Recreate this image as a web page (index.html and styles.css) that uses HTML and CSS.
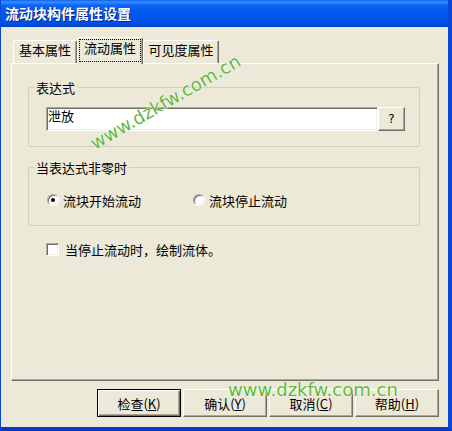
FILE: index.html
```html
<!DOCTYPE html>
<html lang="zh-CN">
<head>
  <meta charset="UTF-8">
  <title>流动块构件属性设置</title>
  <link rel="stylesheet" href="styles.css">
</head>
<body>
  <div class="window">
    <div class="titlebar">流动块构件属性设置</div>
    <div class="client">
      <div class="tabs">
        <div class="tab tab-basic">基本属性</div>
        <div class="tab tab-flow active"><span class="focus">流动属性</span></div>
        <div class="tab tab-visible">可见度属性</div>
      </div>
      <div class="panel">
        <fieldset class="group group-expr">
          <legend>表达式</legend>
          <div class="expr-row">
            <div class="edit">泄放</div>
            <button class="btn btn-q">?</button>
          </div>
        </fieldset>
        <fieldset class="group group-mode">
          <legend>当表达式非零时</legend>
          <div class="radio-row">
            <label class="radio"><span class="dot checked"></span>流块开始流动</label>
            <label class="radio"><span class="dot"></span>流块停止流动</label>
          </div>
        </fieldset>
        <label class="check"><span class="box"></span>当停止流动时，绘制流体。</label>
      </div>
      <div class="buttons">
        <button class="btn btn-wide default">检查(<u>K</u>)</button>
        <button class="btn btn-wide">确认(<u>Y</u>)</button>
        <button class="btn btn-wide">取消(<u>C</u>)</button>
        <button class="btn btn-wide">帮助(<u>H</u>)</button>
      </div>
    </div>
    <div class="watermark wm-tilted">www.dzkfw.com.cn</div>
    <div class="watermark wm-flat">www.dzkfw.com.cn</div>
  </div>
</body>
</html>
```

FILE: styles.css
```css
html, body {
  margin: 0;
  padding: 0;
  background: #ECE9D8;
}
body {
  font-family: "Noto Sans CJK SC", sans-serif;
  font-size: 13px;
  color: #000;
}
.window {
  position: relative;
  width: 452px;
  height: 431px;
  box-sizing: border-box;
  display: flex;
  flex-direction: column;
  background: #ECE9D8;
  border-left: 1px solid #0848DC;
  border-right: 4px solid #0746D6;
  border-bottom: 4px solid #0638C8;
  overflow: hidden;
}
.titlebar {
  flex: none;
  height: 27px;
  line-height: 27px;
  padding-left: 4px;
  color: #fff;
  font-size: 14px;
  font-weight: bold;
  text-shadow: 1px 1px #0A1E80;
  background: linear-gradient(to bottom, #0A62F0 0, #3A8EFF 2px, #0F66F4 5px, #0058EE 11px, #0054E8 20px, #0050E0 24px, #0040C8 27px);
}
.client {
  flex: 1;
  padding: 10px 9px 0 10px;
}

/* tabs */
.tabs {
  display: flex;
  align-items: flex-end;
  height: 26px;
  padding-left: 2px;
  position: relative;
  z-index: 1;
}
.tab {
  box-sizing: border-box;
  height: 23px;
  border: 1px solid #fff;
  border-right-color: #716F64;
  border-bottom: none;
  border-radius: 2px 2px 0 0;
  box-shadow: inset -1px 0 #ACA899;
  background: #ECE9D8;
  text-align: center;
  line-height: 17px;
  white-space: nowrap;
}
.tab-basic { width: 64px; }
.tab-flow { width: 66px; }
.tab-visible { width: 76px; }
.tab.active {
  height: 27px;
  margin-bottom: -1px;
  padding: 1px 1px 0;
}
.focus {
  display: block;
  box-sizing: border-box;
  height: 23px;
  line-height: 16px;
  border: 1px dotted #000;
}

/* panel */
.panel {
  box-sizing: border-box;
  height: 318px;
  border: 1px solid;
  border-color: #fff #716F64 #716F64 #fff;
  box-shadow: inset -1px -1px #ACA899;
  padding: 16px 0 0 16px;
}
.group {
  box-sizing: border-box;
  width: 392px;
  margin: 0;
  border: 1px solid #D0D0BF;
  border-radius: 2px;
  padding: 12px 0 15px 5px;
}
.group legend {
  padding: 0 2px;
  line-height: 15px;
}
.group-mode {
  margin-top: 13px;
  padding: 17px 0 17px 5px;
}
.expr-row {
  display: flex;
  margin-left: 12px;
}
.edit {
  box-sizing: border-box;
  width: 332px;
  height: 24px;
  border: 1px solid;
  border-color: #ACA899 #fff #fff #ACA899;
  box-shadow: inset 1px 1px #716F64, inset -1px -1px #F1EFE2;
  background: #fff;
  padding-left: 1px;
  line-height: 15px;
}

/* buttons */
.btn {
  box-sizing: border-box;
  height: 24px;
  border: 1px solid;
  border-color: #fff #716F64 #716F64 #fff;
  box-shadow: inset -1px -1px #ACA899;
  background: #ECE9D8;
  font: inherit;
  color: #000;
  padding: 0;
}
.btn-q {
  width: 27px;
  font-family: "DejaVu Sans", sans-serif;
  font-size: 12px;
}
.btn-wide {
  width: 84px;
  height: 28px;
}
.btn.default {
  border: 1px solid #000;
  box-shadow: inset 1px 1px #fff, inset -1px -1px #716F64, inset -2px -2px #ACA899;
}
.buttons {
  display: flex;
  justify-content: flex-end;
  gap: 2px;
  margin-top: 8px;
}

/* radios and checkbox */
.radio-row {
  display: flex;
  margin-left: 13px;
  height: 16px;
}
.radio {
  display: flex;
  align-items: center;
  gap: 4px;
  width: 146px;
}
.dot {
  position: relative;
  box-sizing: border-box;
  width: 12px;
  height: 12px;
  border-radius: 50%;
  border: 1px solid;
  border-color: #ACA899 #fff #fff #ACA899;
  box-shadow: inset 1px 1px #716F64, inset -1px -1px #F1EFE2;
  background: #fff;
}
.dot.checked::after {
  content: "";
  position: absolute;
  left: 3px;
  top: 3px;
  width: 4px;
  height: 4px;
  border-radius: 50%;
  background: #000;
}
.check {
  display: flex;
  align-items: center;
  gap: 6px;
  height: 16px;
  margin: 15px 0 0 18px;
}
.box {
  box-sizing: border-box;
  width: 13px;
  height: 13px;
  border: 1px solid;
  border-color: #ACA899 #fff #fff #ACA899;
  box-shadow: inset 1px 1px #716F64, inset -1px -1px #F1EFE2;
  background: #fff;
}

/* watermark overlays */
.watermark {
  position: absolute;
  font-family: "DejaVu Sans", sans-serif;
  font-size: 18px;
  line-height: 21px;
  color: #62B83E;
  text-shadow: 0 0 2px #fff, 0 0 1px #fff;
  white-space: nowrap;
}
.wm-tilted {
  left: 94px;
  top: 133px;
  transform-origin: 0 17px;
  transform: rotate(-30deg);
}
.wm-flat {
  left: 227px;
  top: 379px;
}
```
